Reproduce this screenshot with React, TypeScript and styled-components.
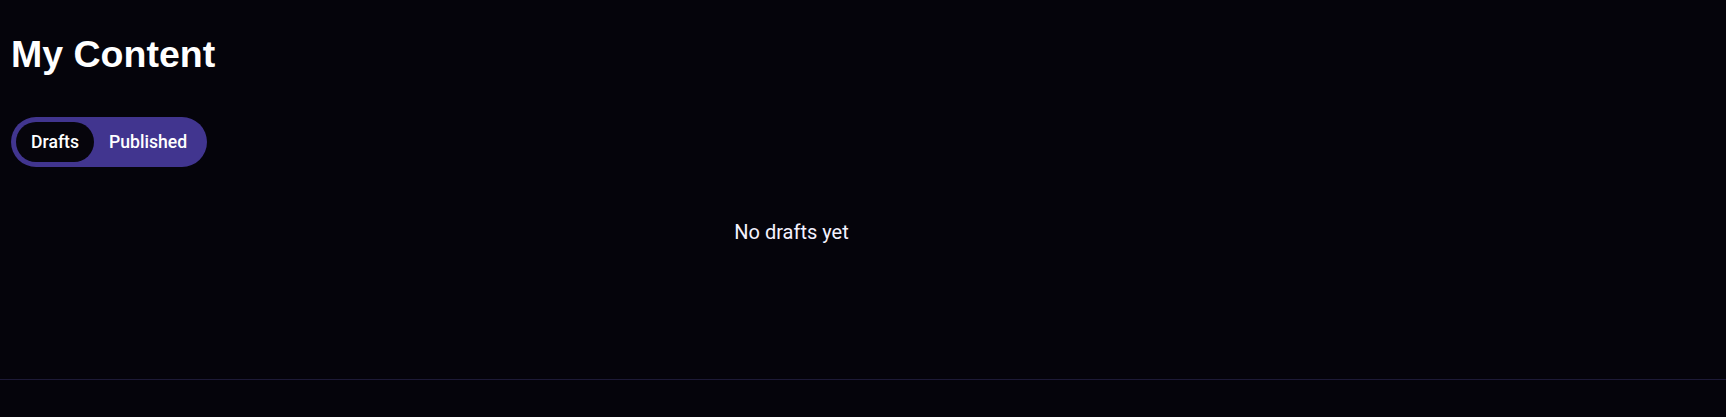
import React, { useState } from "react";
import styled, { createGlobalStyle } from "styled-components";

const GlobalStyle = createGlobalStyle`
  html, body {
    margin: 0;
    padding: 0;
    background: #05040b;
  }
  body {
    font-family: Roboto, "Liberation Sans", Arial, sans-serif;
    color: #ffffff;
  }
  * { box-sizing: border-box; }
`;

const Page = styled.div`
  min-height: 417px;
  background: #05040b;
  display: flex;
  flex-direction: column;
`;

const Main = styled.main`
  padding: 32px 11px 0;
  display: flex;
  flex-direction: column;
  align-items: flex-start;
`;

const Title = styled.h1`
  margin: 0;
  font-family: "Liberation Sans", Arial, sans-serif;
  font-weight: 700;
  font-size: 37.5px;
  line-height: 44px;
  color: #ffffff;
`;

const Toggle = styled.div`
  margin-top: 41px;
  display: flex;
  padding: 5px;
  border-radius: 25px;
  background: #41358f;
`;

const ToggleButton = styled.button<{ $active: boolean }>`
  border: none;
  cursor: pointer;
  height: 40px;
  padding: 0 15px;
  border-radius: 20px;
  font-family: Roboto, sans-serif;
  font-weight: 500;
  font-size: 17.6px;
  color: #ffffff;
  background: ${(p) => (p.$active ? "#06050c" : "transparent")};
`;

const EmptyState = styled.div`
  align-self: stretch;
  max-width: 1561px;
  padding: 50px 0 132px;
  text-align: center;
  font-family: Roboto, sans-serif;
  font-size: 20px;
  line-height: 30px;
  color: #f4f2ff;
`;

const Footer = styled.footer`
  border-top: 1px solid #1d1a37;
  flex: 1;
`;

export default function App() {
  const [tab, setTab] = useState<"drafts" | "published">("drafts");
  return (
    <>
      <GlobalStyle />
      <Page>
        <Main>
          <Title>My Content</Title>
          <Toggle>
            <ToggleButton $active={tab === "drafts"} onClick={() => setTab("drafts")}>
              Drafts
            </ToggleButton>
            <ToggleButton $active={tab === "published"} onClick={() => setTab("published")}>
              Published
            </ToggleButton>
          </Toggle>
          <EmptyState>{tab === "drafts" ? "No drafts yet" : "No published content yet"}</EmptyState>
        </Main>
        <Footer />
      </Page>
    </>
  );
}
